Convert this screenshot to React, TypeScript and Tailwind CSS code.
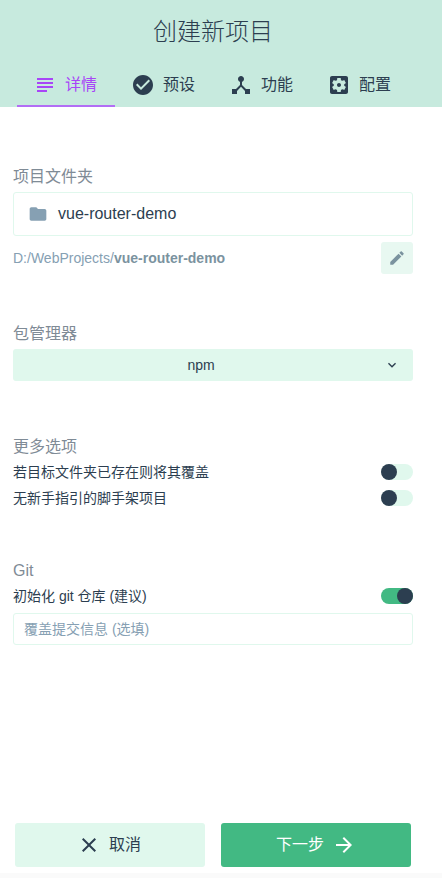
const FONT = "font-['Liberation_Sans','Noto_Sans_CJK_SC',sans-serif]";

const Icon = ({ d, className }: { d: string; className: string }) => (
  <svg viewBox="0 0 24 24" className={className} fill="currentColor">
    <path d={d} />
  </svg>
);

const paths = {
  subject: "M14 17H4v2h10v-2zm6-8H4v2h16V9zM4 15h16v-2H4v2zM4 5v2h16V5H4z",
  check:
    "M12 2C6.48 2 2 6.48 2 12s4.48 10 10 10 10-4.48 10-10S17.52 2 12 2zm-2 15l-5-5 1.41-1.41L10 14.17l7.59-7.59L19 8l-9 9z",
  hub: "M17 16l-4-4V8.82C14.16 8.4 15 7.3 15 6c0-1.66-1.34-3-3-3S9 4.34 9 6c0 1.3.84 2.4 2 2.82V12l-4 4H3v5h5v-3.05l4-4.2 4 4.2V21h5v-5h-4z",
  settings:
    "M12 10c-1.1 0-2 .9-2 2s.9 2 2 2 2-.9 2-2-.9-2-2-2zm7-7H5c-1.11 0-2 .9-2 2v14c0 1.1.89 2 2 2h14c1.11 0 2-.9 2-2V5c0-1.1-.89-2-2-2zm-1.75 9c0 .23-.02.46-.05.68l1.48 1.16c.13.11.17.3.08.45l-1.4 2.42c-.09.15-.27.21-.43.15l-1.74-.7c-.36.28-.76.51-1.18.69l-.26 1.85c-.03.17-.18.3-.35.3h-2.8c-.17 0-.32-.13-.35-.29l-.26-1.85c-.43-.18-.82-.41-1.18-.69l-1.74.7c-.16.06-.34 0-.43-.15l-1.4-2.42c-.09-.15-.05-.34.08-.45l1.48-1.16c-.03-.23-.05-.46-.05-.69 0-.23.02-.46.05-.68l-1.48-1.16c-.13-.11-.17-.3-.08-.45l1.4-2.42c.09-.15.27-.21.43-.15l1.74.7c.36-.28.76-.51 1.18-.69l.26-1.85c.03-.17.18-.3.35-.3h2.8c.17 0 .32.13.35.29l.26 1.85c.43.18.82.41 1.18.69l1.74-.7c.16-.06.34 0 .43.15l1.4 2.42c.09.15.05.34-.08.45l-1.48 1.16c.03.23.05.46.05.69z",
  folder:
    "M10 4H4c-1.1 0-1.99.9-1.99 2L2 18c0 1.1.9 2 2 2h16c1.1 0 2-.9 2-2V8c0-1.1-.9-2-2-2h-8l-2-2z",
  edit: "M3 17.25V21h3.75L17.81 9.94l-3.75-3.75L3 17.25zM20.71 7.04c.39-.39.39-1.02 0-1.41l-2.34-2.34c-.39-.39-1.02-.39-1.41 0l-1.83 1.83 3.75 3.75 1.83-1.83z",
  expand: "M16.59 8.59L12 13.17 7.41 8.59 6 10l6 6 6-6z",
  close:
    "M19 6.41L17.59 5 12 10.59 6.41 5 5 6.41 10.59 12 5 17.59 6.41 19 12 13.41 17.59 19 19 17.59 13.41 12z",
  arrow: "M12 4l-1.41 1.41L16.17 11H4v2h12.17l-5.58 5.59L12 20l8-8z",
};

const tabs = [
  { label: "详情", icon: paths.subject, active: true },
  { label: "预设", icon: paths.check },
  { label: "功能", icon: paths.hub },
  { label: "配置", icon: paths.settings },
];

const Toggle = ({ on }: { on?: boolean }) => (
  <div
    className={`flex h-4 w-8 rounded-full ${
      on ? "justify-end bg-[#42b983]" : "justify-start bg-[#e0f8ed]"
    }`}
  >
    <div className="h-4 w-4 rounded-full bg-[#2c3e50]" />
  </div>
);

const Option = ({ label, on }: { label: string; on?: boolean }) => (
  <div className="flex h-6 items-center justify-between text-sm text-[#2c3e50]">
    <span>{label}</span>
    <Toggle on={on} />
  </div>
);

const Label = ({ children, className }: { children: string; className: string }) => (
  <div className={`h-6 text-base leading-[26px] text-[#7f8b96] ${className}`}>{children}</div>
);

export default function App() {
  return (
    <div className={`flex h-[878px] w-[442px] flex-col overflow-hidden bg-white ${FONT}`}>
      {/* Header */}
      <header className="h-[107px] shrink-0 bg-[#c7eade]">
        <div className="w-[426px]">
          <h1 className="pt-4 text-center text-2xl leading-8 font-light text-[#2c3e50]">
            创建新项目
          </h1>
          <nav className="mt-[15px] flex px-[17px]">
            {tabs.map((tab) => (
              <div
                key={tab.label}
                className={`flex h-11 w-[98px] items-center justify-center gap-2 border-b-2 pt-[2px] pr-[2px] text-base ${
                  tab.active
                    ? "border-[#b26ef5] text-[#a846f7]"
                    : "border-transparent text-[#2c3e50]"
                }`}
              >
                <Icon d={tab.icon} className="h-6 w-6" />
                <span>{tab.label}</span>
              </div>
            ))}
          </nav>
        </div>
      </header>

      {/* Form */}
      <main className="flex-1 px-[13px] pt-[57px] pr-[29px]">
        <Label className="mb-1">项目文件夹</Label>
        <div className="flex h-11 items-center gap-[10px] rounded-[3px] border border-[#e0f8ed] pl-[14px] text-base text-[#2c3e50]">
          <Icon d={paths.folder} className="h-5 w-5 text-[#86a0b3]" />
          <span>vue-router-demo</span>
        </div>
        <div className="mt-[6px] flex h-8 items-center justify-between text-sm text-[#86a0b3]">
          <div>
            D:/WebProjects/<b className="font-bold text-[#7b939f]">vue-router-demo</b>
          </div>
          <div className="flex h-8 w-8 items-center justify-center rounded-[3px] bg-[#e8f8f1]">
            <Icon d={paths.edit} className="h-[18px] w-[18px] text-[#7b939f]" />
          </div>
        </div>

        <Label className="mt-[47px] mb-1">包管理器</Label>
        <div className="relative flex h-8 items-center justify-center rounded-[3px] bg-[#e0f8ed] text-sm text-[#2c3e50]">
          <span className="pr-[24px]">npm</span>
          <Icon d={paths.expand} className="absolute right-[13px] h-4 w-4" />
        </div>

        <Label className="mt-[53px] mb-[2px]">更多选项</Label>
        <div className="flex flex-col gap-[2px]">
          <Option label="若目标文件夹已存在则将其覆盖" />
          <Option label="无新手指引的脚手架项目" />
        </div>

        <Label className="mt-[48px] mb-[2px]">Git</Label>
        <Option label="初始化 git 仓库 (建议)" on />
        <div className="mt-[5px] flex h-8 items-center rounded-[3px] border border-[#e0f8ed] pl-[10px] text-sm text-[#86a0b3]">
          覆盖提交信息 (选填)
        </div>
      </main>

      {/* Footer */}
      <footer className="flex h-[50px] shrink-0 gap-4 bg-white px-[15px]">
        <button className="flex h-11 w-[190px] items-center justify-center gap-2 rounded-[3px] bg-[#e0f8ed] pr-[2px] text-base text-[#2c3e50]">
          <Icon d={paths.close} className="h-6 w-6" />
          <span>取消</span>
        </button>
        <button className="flex h-11 w-[190px] items-center justify-center gap-2 rounded-[3px] bg-[#42b983] text-base text-white">
          <span>下一步</span>
          <Icon d={paths.arrow} className="h-6 w-6" />
        </button>
      </footer>
      <div className="h-[5px] shrink-0 bg-[#fafafa]" />
    </div>
  );
}
